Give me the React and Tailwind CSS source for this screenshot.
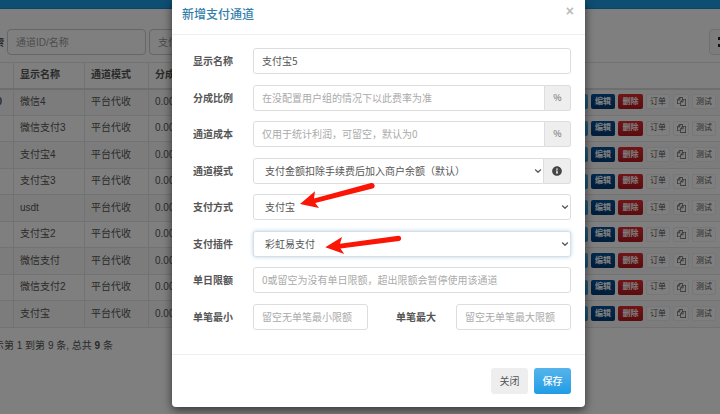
import { FaInfoCircle } from "react-icons/fa";

const channels = [
  { id: "10", name: "微信4" },
  { id: "", name: "微信支付3" },
  { id: "", name: "支付宝4" },
  { id: "", name: "支付宝3" },
  { id: "", name: "usdt" },
  { id: "", name: "支付宝2" },
  { id: "", name: "微信支付" },
  { id: "", name: "微信支付2" },
  { id: "", name: "支付宝" },
];

const field =
  "h-[26px] w-full min-w-0 border border-[#ddd] bg-white pb-[2px] text-[10px] text-[#555] placeholder:text-[#aaa] outline-none";

function CopyIcon() {
  return (
    <svg viewBox="0 0 1792 1792" className="h-[9px] w-[9px]" fill="currentColor" aria-hidden="true">
      <path d="M1696 384q40 0 68 28t28 68v1216q0 40-28 68t-68 28h-960q-40 0-68-28t-28-68v-288h-544q-40 0-68-28t-28-68v-672q0-40 20-88t48-76l408-408q28-28 76-48t88-20h416q40 0 68 28t28 68v328q68-40 128-40h416zm-544 213l-299 299h299v-299zm-640-384l-299 299h299v-299zm196 647l316-316v-416h-384v416q0 40-28 68t-68 28h-416v640h512v-256q0-40 20-88t48-76zm956 804v-1152h-384v416q0 40-28 68t-68 28h-416v640h896z" />
    </svg>
  );
}

function RowActions() {
  const base = "flex h-[15px] items-center justify-center rounded-xs text-[8px] leading-none whitespace-nowrap";
  const light = "border border-[#eee] bg-white text-[#555]";
  return (
    <div className="flex items-center justify-end gap-[3px] pb-px">
      <button type="button" className={`${base} w-6 bg-linear-to-b from-[#54b4eb] to-[#1d9ce5] text-white`}>详情</button>
      <button type="button" className={`${base} w-6 bg-linear-to-b from-[#04519b] to-[#033c73] font-bold text-white`}>编辑</button>
      <button type="button" className={`${base} w-[25px] bg-linear-to-b from-[#e12b31] to-[#b5181e] font-bold text-white`}>删除</button>
      <button type="button" className={`${base} ${light} w-6`}>订单</button>
      <button type="button" aria-label="复制" className={`${base} ${light} w-4`}><CopyIcon /></button>
      <button type="button" className={`${base} ${light} w-6`}>测试</button>
    </div>
  );
}

function ChannelPage() {
  const head = "border border-t-[#e4e4e4] border-x-[#e4e4e4] border-b-2 border-b-[#ddd] px-[6px] pb-[2px] text-left font-bold";
  const cell = "border border-[#e4e4e4] px-[6px] pb-[2px]";
  return (
    <div>
      <div className="h-[9px] border-b border-[#178acc] bg-[#1d9ce5]" />
      <div className="-ml-4 text-[10px] text-[#555]">
        <form className="flex items-center gap-[3px] pt-5">
          <label htmlFor="search" className="w-5 whitespace-nowrap font-bold">搜索</label>
          <input id="search" placeholder="通道ID/名称" className="h-[26px] w-[139px] rounded-sm border border-[#ccc] bg-white px-2 text-[10px] outline-none placeholder:text-[#999]" />
          <input aria-label="支付方式" placeholder="支付方式" className="h-[26px] w-[139px] rounded-sm border border-[#ccc] bg-white px-2 text-[10px] outline-none placeholder:text-[#999]" />
          <button type="button" aria-label="切换" className="-mr-4 ml-auto flex h-[26px] w-[27px] items-center rounded-sm border border-[#ddd] bg-[#f8f8f8] pl-2 text-[#222]">
            <svg viewBox="0 0 10 10" className="h-[10px] w-[10px]" fill="currentColor" aria-hidden="true">
              <path d="M0 0h3v3H0zM4 0h6v3H4zM0 7h3v3H0zM4 7h6v3H4z" />
            </svg>
          </button>
        </form>
        <table className="mt-[7px] w-full table-fixed border-collapse">
          <thead>
            <tr className="h-[26px]">
              <th className={`${head} w-[29px]`} />
              <th className={`${head} w-[71px]`}>显示名称</th>
              <th className={`${head} w-16`}>通道模式</th>
              <th className={`${head} w-16`}>分成比例</th>
              <th className="border-y border-t-[#e4e4e4] border-b-2 border-b-[#ddd]" />
            </tr>
          </thead>
          <tbody>
            {channels.map((c) => (
              <tr key={c.name} className="h-[26px] odd:h-[27px] odd:bg-[#f9f9f9]">
                <td className={`${cell} font-bold`}>{c.id}</td>
                <td className={cell}>{c.name}</td>
                <td className={cell}>平台代收</td>
                <td className={cell}>0.00</td>
                <td className="border-y border-[#e4e4e4] pr-1"><RowActions /></td>
              </tr>
            ))}
          </tbody>
        </table>
        <p className="pt-[11px] leading-[14px]">显示第 1 到第 9 条, 总共 <b>9</b> 条</p>
      </div>
    </div>
  );
}

function Chevron() {
  return (
    <svg viewBox="0 0 8 8" className="pointer-events-none absolute top-[9px] right-[2px] h-2 w-2" fill="none" stroke="#555" strokeWidth="1.2" strokeLinecap="round" strokeLinejoin="round" aria-hidden="true">
      <path d="M1.4 2.8 4 5.3 6.6 2.8" />
    </svg>
  );
}

function Label({ htmlFor, narrow, children }) {
  return (
    <label htmlFor={htmlFor} className={`${narrow ? "w-12" : "w-[61px]"} shrink-0 pb-[2px] text-right font-bold whitespace-nowrap text-[#555]`}>
      {children}
    </label>
  );
}

function Row({ children }) {
  return <div className="mb-[10px] flex items-center gap-5 odd:mb-[11px]">{children}</div>;
}

function PercentRow({ id, label, placeholder }) {
  return (
    <Row>
      <Label htmlFor={id}>{label}</Label>
      <div className="flex min-w-0 flex-1">
        <input id={id} placeholder={placeholder} className={`${field} rounded-l-[3px] px-2`} />
        <span className="flex w-[26px] shrink-0 items-center justify-center rounded-r-[3px] border border-l-0 border-[#ddd] bg-[#eee] text-[9px] text-[#666]">%</span>
      </div>
    </Row>
  );
}

function SelectRow({ id, label, option, focused, info }) {
  return (
    <Row>
      <Label htmlFor={id}>{label}</Label>
      <div className="flex min-w-0 flex-1">
        <div className="relative min-w-0 flex-1">
          <select id={id} className={`${field} appearance-none px-[11px] ${info ? "rounded-l-[3px]" : "rounded-[3px]"} ${focused ? "border-[#b3d6f2] shadow-[0_0_4px_#b3d6f2]" : ""}`}>
            <option>{option}</option>
          </select>
          <Chevron />
        </div>
        {info && (
          <span className="flex w-[27px] shrink-0 items-center justify-center rounded-r-[3px] border border-l-0 border-[#ddd] bg-[#eee] text-[#444]">
            <FaInfoCircle size={10} />
          </span>
        )}
      </div>
    </Row>
  );
}

function Arrows() {
  return (
    <svg viewBox="0 0 110 80" className="pointer-events-none absolute top-[180px] left-[125px] h-20 w-[110px]" fill="#fb1505" aria-hidden="true">
      <path d="M3 24 18 11.3 17 18.6 74 3.1A2.7 2.7 0 0 1 75.6 8.4L18.2 23 22 28Z" />
      <path d="M28.3 67.3 45 57 43 63.8 101.4 55.7A2.7 2.7 0 0 1 102.2 61L43.4 68.4 47.3 74Z" />
    </svg>
  );
}

function ChannelDialog() {
  return (
    <div role="dialog" aria-labelledby="dialog-title" className="relative w-full rounded-b-[4px] bg-white text-[10px] text-[#555] shadow-[0_3px_10px_rgba(0,0,0,0.6)]">
      <header className="flex h-[35px] items-start justify-between border-b border-[#eee] pr-[11px] pl-[10px]">
        <h4 id="dialog-title" className="pt-[5px] text-[12px] leading-[18px] font-medium text-[#317eac]">新增支付通道</h4>
        <button type="button" aria-label="关闭" className="pt-1 font-['Liberation_Sans',sans-serif] text-[14px] leading-[14px] font-bold text-[#bbb]">×</button>
      </header>
      <form className="pt-[13px] pr-[14px] pb-[14px]">
        <Row>
          <Label htmlFor="name">显示名称</Label>
          <input id="name" defaultValue="支付宝5" className={`${field} flex-1 rounded-[3px] px-2`} />
        </Row>
        <PercentRow id="rate" label="分成比例" placeholder="在没配置用户组的情况下以此费率为准" />
        <PercentRow id="cost" label="通道成本" placeholder="仅用于统计利润，可留空，默认为0" />
        <SelectRow id="mode" label="通道模式" option="支付金额扣除手续费后加入商户余额（默认）" info />
        <SelectRow id="type" label="支付方式" option="支付宝" />
        <SelectRow id="plugin" label="支付插件" option="彩虹易支付" focused />
        <Row>
          <Label htmlFor="daily">单日限额</Label>
          <input id="daily" placeholder="0或留空为没有单日限额，超出限额会暂停使用该通道" className={`${field} flex-1 rounded-[3px] px-2`} />
        </Row>
        <Row>
          <Label htmlFor="min">单笔最小</Label>
          <input id="min" placeholder="留空无单笔最小限额" className={`${field} flex-1 rounded-[3px] px-2`} />
          <Label htmlFor="max" narrow>单笔最大</Label>
          <input id="max" placeholder="留空无单笔最大限额" className={`${field} flex-1 rounded-[3px] px-2`} />
        </Row>
      </form>
      <footer className="flex justify-end gap-[6px] border-t border-[#eee] px-[14px] py-[13px]">
        <button type="button" className="h-[26px] w-[37px] rounded-[3px] bg-[#eee] pb-px text-[#555]">关闭</button>
        <button type="button" className="h-[26px] w-[37px] rounded-[3px] bg-linear-to-b from-[#54b4eb] to-[#1d9ce5] pb-px font-medium text-white">保存</button>
      </footer>
      <Arrows />
    </div>
  );
}

export default function App() {
  return (
    <div className="relative min-h-screen overflow-hidden bg-white font-['Liberation_Sans','Noto_Sans_CJK_SC',sans-serif]">
      <ChannelPage />
      <div className="absolute inset-0 flex items-start bg-black/50 pr-[135px] pl-[172px] font-['Noto_Sans_CJK_SC',sans-serif]">
        <ChannelDialog />
      </div>
    </div>
  );
}
